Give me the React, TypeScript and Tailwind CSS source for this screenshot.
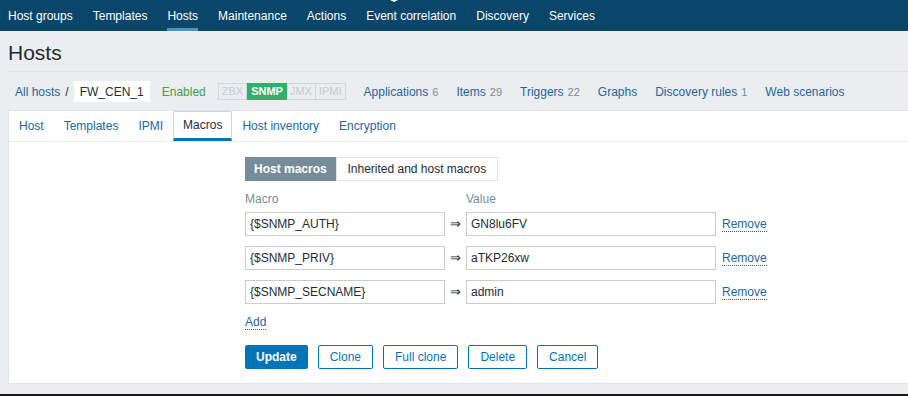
import { ReactNode } from 'react';

const NAV = ['Host groups', 'Templates', 'Hosts', 'Maintenance', 'Actions', 'Event correlation', 'Discovery', 'Services'];

const LINKS: { label: string; count?: string }[] = [
  { label: 'Applications', count: '6' },
  { label: 'Items', count: '29' },
  { label: 'Triggers', count: '22' },
  { label: 'Graphs' },
  { label: 'Discovery rules', count: '1' },
  { label: 'Web scenarios' },
];

const TABS = ['Host', 'Templates', 'IPMI', 'Macros', 'Host inventory', 'Encryption'];

const MACROS = [
  { name: '{$SNMP_AUTH}', value: 'GN8lu6FV' },
  { name: '{$SNMP_PRIV}', value: 'aTKP26xw' },
  { name: '{$SNMP_SECNAME}', value: 'admin' },
];

function OutlineButton({ children }: { children: ReactNode }) {
  return (
    <button
      type="button"
      className="h-[24px] rounded-[2px] border border-[#0275b8] bg-white px-[11px] text-[12px] text-[#0275b8]"
    >
      {children}
    </button>
  );
}

export default function App() {
  return (
    <div className="relative h-[396px] w-[908px] overflow-hidden bg-[#ebeef0] font-['Liberation_Sans',Arial,sans-serif] text-[12px] text-[#1f2c33]">
      {/* top menu */}
      <nav className="relative flex h-[31px] items-stretch gap-[20px] bg-[#0a466a] pl-[8px]">
        {NAV.map((item) => (
          <div
            key={item}
            className={`flex items-center border-b-[3px] pt-[3px] text-[12px] text-white ${
              item === 'Hosts' ? 'border-[#4796c4]' : 'border-transparent'
            }`}
          >
            {item}
          </div>
        ))}
        <div className="absolute left-[390px] top-0 h-0 w-0 border-x-[4px] border-t-[2px] border-x-transparent border-t-white" />
      </nav>

      {/* header */}
      <div className="ml-[8px] flex h-[41px] items-center border-b border-[#dde2e5] pt-[3px] text-[21px] text-[#1f2c33]">
        Hosts
      </div>

      {/* breadcrumbs */}
      <div className="flex h-[38px] items-center pl-[15px] pt-[1px]">
        <a className="text-[#1f65a0]">All hosts</a>
        <span className="mx-[5px] text-[#1f2c33]">/</span>
        <span className="flex h-[21px] items-center bg-white px-[6px]">FW_CEN_1</span>
        <span className="ml-[12px] text-[#429e47]">Enabled</span>
        <div className="ml-[12px] flex h-[17px] text-[11px] font-bold">
          <span className="flex items-center border border-[#d1d7da] px-[3px] font-normal text-[#c5cbce]">ZBX</span>
          <span className="flex items-center bg-[#34af67] px-[4px] text-white">SNMP</span>
          <span className="flex items-center border-y border-[#d1d7da] px-[3px] font-normal text-[#c5cbce]">JMX</span>
          <span className="flex items-center border border-[#d1d7da] px-[3px] font-normal text-[#c5cbce]">IPMI</span>
        </div>
        <div className="ml-[18px] flex gap-[18px]">
          {LINKS.map((l) => (
            <span key={l.label} className="text-[#1f65a0]">
              {l.label}
              {l.count && <span className="ml-[4px] text-[11px] text-[#768d99]">{l.count}</span>}
            </span>
          ))}
        </div>
      </div>

      {/* panel */}
      <div className="ml-[8px] h-[274px] border border-r-0 border-[#dfe4e7] bg-white">
        <div className="flex h-[31px] items-stretch border-b border-[#ebeef0]">
          {TABS.map((t) => (
            <div
              key={t}
              className={`flex items-center ${
                t === 'Macros'
                  ? 'rounded-t-[2px] border border-b-[3px] border-[#c4d8e8] border-b-[#0275b8] px-[9px] text-[#1f2c33]'
                  : 'px-[10px] text-[#1f65a0]'
              }`}
            >
              {t}
            </div>
          ))}
        </div>

        <div className="pl-[236px] pt-[15px]">
          <div className="flex h-[24px] w-[253px] text-[12px]">
            <div className="flex items-center bg-[#768d99] px-[9px] font-bold text-white">Host macros</div>
            <div className="flex flex-1 items-center justify-center border border-[#dfe4e7] text-[#1f2c33]">
              Inherited and host macros
            </div>
          </div>

          <div className="mt-[9px] flex text-[#768d99]">
            <span className="w-[221px]">Macro</span>
            <span>Value</span>
          </div>

          <div className="mt-[4px] flex flex-col gap-[10px]">
            {MACROS.map((m) => (
              <div key={m.name} className="flex h-[24px] items-center">
                <div className="flex h-[24px] w-[200px] items-center border border-[#cccccc] px-[4px]">{m.name}</div>
                <span className="w-[21px] text-center text-[13px]">⇒</span>
                <div className="flex h-[24px] w-[250px] items-center border border-[#cccccc] px-[4px]">{m.value}</div>
                <span className="ml-[6px] border-b border-dotted border-[#1f65a0] leading-[14px] text-[#1f65a0]">
                  Remove
                </span>
              </div>
            ))}
          </div>

          <div className="mt-[9px]">
            <span className="border-b border-dotted border-[#1f65a0] leading-[14px] text-[#1f65a0]">Add</span>
          </div>

          <div className="mt-[14px] flex gap-[10px]">
            <button
              type="button"
              className="h-[24px] rounded-[2px] bg-[#0275b8] px-[11px] text-[12px] font-bold text-white"
            >
              Update
            </button>
            <OutlineButton>Clone</OutlineButton>
            <OutlineButton>Full clone</OutlineButton>
            <OutlineButton>Delete</OutlineButton>
            <OutlineButton>Cancel</OutlineButton>
          </div>
        </div>
      </div>

      <div className="absolute bottom-0 left-0 h-[2px] w-full bg-[#1a1a1a]" />
    </div>
  );
}
